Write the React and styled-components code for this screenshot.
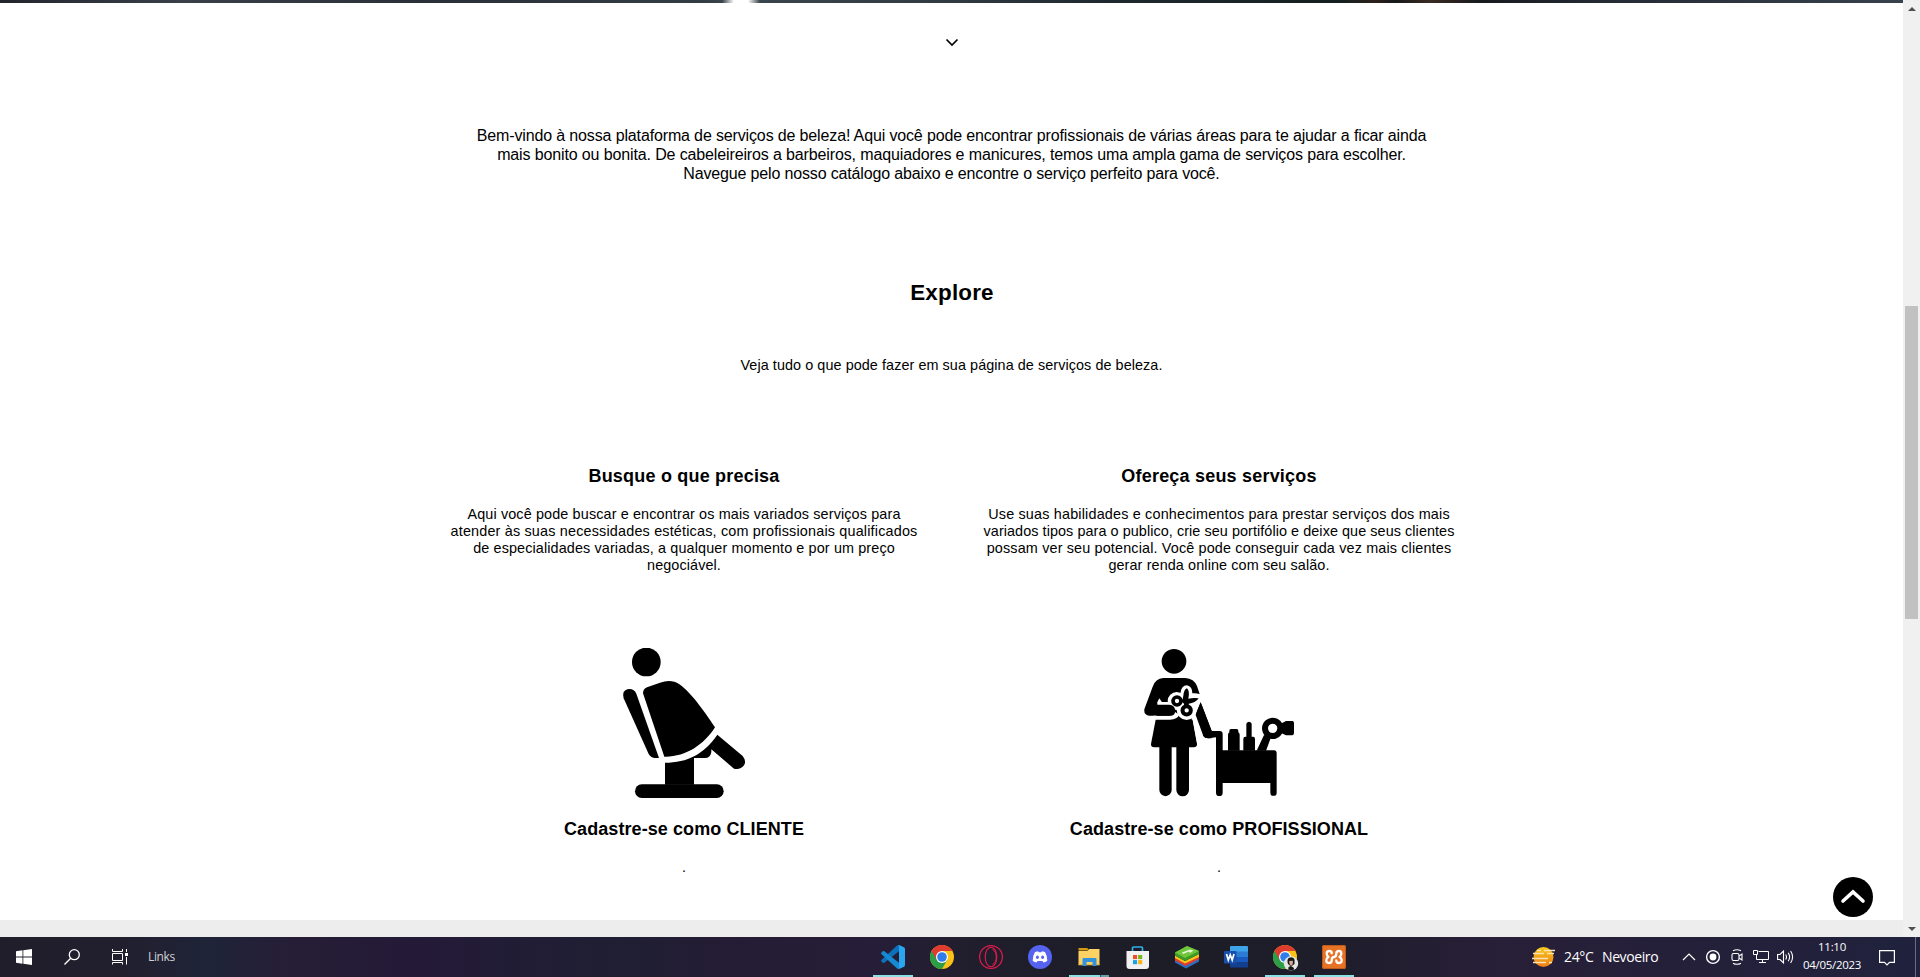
import React from 'react';
import styled, { createGlobalStyle } from 'styled-components';

const Global = createGlobalStyle`
  * { box-sizing: border-box; }
  body { margin: 0; background: #fff; color: #000; overflow: hidden; font-family: "Liberation Sans", Arial, sans-serif; }
  h2, h3, p { margin: 0; }
  svg { display: block; flex: none; }
`;

const Desktop = styled.div`
  width: 1920px;
  height: 977px;
  display: flex;
  flex-direction: column;
`;
const Viewport = styled.div`
  display: flex;
  height: 937px;
`;
const Page = styled.main`
  position: relative;
  width: 1903px;
  display: flex;
  flex-direction: column;
  align-items: center;
`;
const HeroEdge = styled.div`
  width: 100%;
  height: 3px;
  background: linear-gradient(90deg, #22252c 0, #3a3f49 180px, #2a2f38 420px, #333c44 700px, #38424a 722px, #fff 734px, #fff 748px, #39444c 760px, #303a41 950px, #1e2a2f 1100px, #14201f 1340px, #2d211d 1375px, #17191a 1395px, #3a2a23 1430px, #171a1d 1480px, #252a35 1600px, #38424c 1903px);
`;
const ArrowDown = styled.div`
  height: 123px;
  padding-top: 35px;
`;
const Line = styled.span`
  display: block;
  white-space: nowrap;
  letter-spacing: ${(p) => p.$track}px;
`;
const Intro = styled.p`
  font-size: 16px;
  line-height: 19px;
  text-align: center;
`;
const SectionTitle = styled.h2`
  margin-top: 97px;
  padding-left: 1px;
  font-size: 22.4px;
  line-height: 26px;
  letter-spacing: 0.2px;
`;
const Lead = styled.p`
  margin-top: 51px;
  font-size: 14.4px;
  line-height: 17px;
  letter-spacing: 0.07px;
`;
const Columns = styled.section`
  margin-top: 92px;
  display: grid;
  grid-template-columns: 535px 535px;
`;
const Card = styled.article`
  display: flex;
  flex-direction: column;
  align-items: center;
  text-align: center;
`;
const CardTitle = styled.h3`
  font-size: 18px;
  line-height: 21px;
  letter-spacing: ${(p) => p.$track}px;
`;
const CardText = styled.p`
  margin: 19px 0 74px;
  font-size: 14.4px;
  line-height: 17px;
  height: 68px;
`;
const CardAction = styled(CardTitle)`
  margin-top: 21px;
`;
const Dot = styled.p`
  margin-top: 19px;
  font-size: 14.4px;
  line-height: 17px;
`;
const PageFooter = styled.footer`
  width: 100%;
  height: 17px;
  margin-top: auto;
  background: #ededed;
`;
const ToTop = styled.button`
  position: absolute;
  right: 30px;
  bottom: 20px;
  width: 40px;
  height: 40px;
  padding: 0 0 2px;
  border: 0;
  border-radius: 50%;
  background: #000;
  display: flex;
  align-items: center;
  justify-content: center;
`;
const Scrollbar = styled.div`
  width: 17px;
  background: #f0f0f0;
  display: flex;
  flex-direction: column;
  align-items: center;
`;
const ScrollButton = styled.div`
  width: 17px;
  height: 17px;
  display: flex;
  align-items: center;
  justify-content: center;
`;
const Thumb = styled.div`
  width: 13px;
  height: 313px;
  margin: 289px 0 auto;
  background: #c1c1c1;
`;

const Taskbar = styled.nav`
  height: 40px;
  display: flex;
  color: #fff;
  font-family: "Open Sans", sans-serif;
  background: linear-gradient(90deg, #211e2b 0, #211f2e 120px, #1f2438 210px, #261d36 300px, #241a38 420px, #1f1f33 600px, #251c35 760px, #261e38 870px, #201e2c 980px, #1c1d27 1130px, #1e1d2a 1320px, #281f38 1500px, #24203a 1700px, #20223d 1920px);
`;
const StartArea = styled.div`
  width: 869px;
  display: flex;
  align-items: center;
`;
const BarCell = styled.div`
  width: ${(p) => p.$w}px;
  height: 40px;
  display: flex;
  align-items: center;
  justify-content: center;
`;
const LinksLabel = styled.span`
  padding: 0 0 1px 4px;
  font-size: 12px;
  letter-spacing: -0.35px;
  color: #d2d2d6;
`;
const Apps = styled.div`
  display: flex;
  gap: 1px;
`;
const AppSlot = styled.div`
  width: 48px;
  height: 40px;
  display: flex;
  flex-direction: column;
  align-items: center;
  justify-content: space-between;
  padding-top: 8px;
`;
const Underline = styled.div`
  width: 40px;
  height: 2px;
  background: ${(p) =>
    p.$kind === 'open'
      ? '#8be0e4'
      : p.$kind === 'stack'
        ? 'linear-gradient(90deg, #8be0e4 31px, #3c585e 31px, #3c585e 32px, #68a0a5 32px)'
        : 'transparent'};
`;
const Weather = styled.div`
  width: 146px;
  margin-left: auto;
  padding-bottom: 1px;
  display: flex;
  align-items: center;
  font-size: 14px;
  white-space: nowrap;
`;
const Temperature = styled.span`
  margin-left: 8px;
  width: 38px;
  letter-spacing: -0.35px;
`;
const Condition = styled.span`
  letter-spacing: -0.4px;
`;
const Clock = styled.div`
  width: 70px;
  padding-top: 1px;
  text-align: center;
  font-size: 11.5px;
  line-height: 18px;
  letter-spacing: -0.3px;
`;
const ShowDesktop = styled.div`
  width: 5px;
  margin-left: 8px;
  border-left: 1px solid #6c6c80;
`;

const ClientIcon = () => (
  <svg width="150" height="150" viewBox="27 54 450 450">
    <circle cx="139" cy="96" r="43" />
    <path d="M129 190Q129 177 141 172L180 158Q214 146 238 163C277 190 322 258 345 292C312 345 255 382 193 380Z" />
    <path d="M71 205Q65 183 82 178Q101 174 109 191L177 384H163Q152 383 146 372Z" />
    <path d="M352 314L428 378Q440 393 432 406Q420 421 402 416L334 358V366Q331 384 315 384H282V464H195V398C262 398 313 372 352 314Z" />
    <rect x="105" y="463" width="266" height="41" rx="20.5" />
  </svg>
);

const ProfessionalIcon = () => (
  <svg width="150" height="150" viewBox="312 54 450 450">
    <circle cx="402" cy="94" r="37" />
    <path d="M370 144H436Q462 146 471 168L479 192L455 225V270H347L350 257H328Q311 255 313 238L338 170Q346 146 370 144Z" />
    <path d="M347 269H458L471 341Q472 351 461 352H342Q332 351 333 342Z" />
    <path d="M358 345H395V480A18.500 18.500 0 0 1 358 480ZM409 345H447V480A19 19 0 0 1 409 480Z" />
    <path d="M466 255L482 217L515 303H539Q548 303 548 312V361H702Q710 361 710 370V488A9.500 9.500 0 0 1 691 488V459H548V488A10 10 0 0 1 528 488V322L505 325Q494 325 490 318Z" />
    <path d="M564 362V314Q564 309 568 307V302Q568 297 573 297H590Q595 297 595 302V307Q599 309 599 314V362ZM610 362V326Q610 320 616 320H619V281Q620 276 627 275Q634 276 635 281V320H639Q645 320 645 326V362Z" />
    <path d="M650 362L672 315L693 322L678 362ZM722 281L738 273H758Q762 274 762 279V309Q762 315 757 316H738L722 308Z" />
    <circle cx="698" cy="295" r="23" fill="#fff" stroke="#000" strokeWidth="18" />
    <g fill="#fff">
      <path d="M358 205L366 217H352Z" />
      <rect x="352" y="216" width="60" height="9" />
      <path d="M340 257H390Q405 257 405 246L418 254Q412 268 390 269H340Z" />
      <circle cx="410" cy="213" r="27" />
      <circle cx="440" cy="240" r="30" />
      <path d="M421 192Q423 166 441 166Q457 169 457 190Q474 188 485 195Q483 218 461 225L430 228Z" />
      <path d="M456 257L470 252L490 314L472 344L458 269Z" />
    </g>
    <path d="M475 235L482 217L515 303V325H505Q494 325 490 318L467 255Z" />
    <path d="M350 224H388Q405 226 405 240Q404 256 388 257H350Z" />
    <circle cx="411" cy="213" r="12" fill="none" stroke="#000" strokeWidth="11" />
    <circle cx="440" cy="241" r="12.500" fill="none" stroke="#000" strokeWidth="12" />
    <path d="M423 214Q430 207 430 197Q432 178 441 175Q450 183 445 206Q461 202 476 205Q466 220 446 221L447 230H434L431 220Z" />
  </svg>
);

const CodeIcon = () => (
  <svg width="24" height="24" viewBox="63 45 72 72">
    <path fill="#0d70b8" d="M118 63L72 99Q70 100 68 98L64 94Q62 92 64 90L112 46L118 47Z" />
    <path fill="#1789d2" d="M118 99L72 63Q70 62 68 64L64 68Q62 70 64 72L112 116L118 115Z" />
    <path fill="#2aa6f0" d="M112 46Q115 44 119 46L132 52Q135 54 135 57V105Q135 108 132 110L119 116Q115 118 112 116Q117 118 117 112V50Q117 44 112 46Z" />
  </svg>
);
const ChromeMark = () => (
  <>
    <circle cx="12" cy="12" r="12" fill="#fbc116" />
    <path fill="#2b9e47" d="M1.600 6A12 12 0 0 0 12 24L17.200 15L12 12Z" />
    <path fill="#df3b2f" d="M1.600 6A12 12 0 0 1 22.400 6H12V12L6.800 15Z" />
    <circle cx="12" cy="12" r="6" fill="#fff" />
    <circle cx="12" cy="12" r="4.800" fill="#2f7de9" />
  </>
);
const ChromeIcon = () => (
  <svg width="24" height="24" viewBox="0 0 24 24"><ChromeMark /></svg>
);
const ChromeProfileIcon = () => (
  <svg width="24" height="24" viewBox="0 0 24 24" overflow="visible">
    <ChromeMark />
    <circle cx="18" cy="18.500" r="7.200" fill="#e5e5e3" />
    <path fill="#17171a" d="M14.500 17Q14 12.500 18 12.200Q22.300 12.500 21.500 17L21.500 19L18 21.500L15 19ZM15.500 22L18 21L21 23L20.500 25.300Q18 26 15.300 25Z" />
    <path fill="#d8ab98" d="M16.200 16L19.800 15.700Q20.300 19.500 18.300 20.700Q16.200 20 16.200 16Z" />
  </svg>
);
const OperaIcon = () => (
  <svg width="24" height="24" viewBox="0 0 24 24" fill="none" stroke="#e31b4c">
    <circle cx="12" cy="12" r="11.400" strokeWidth="1.200" />
    <ellipse cx="12" cy="12" rx="5.800" ry="9.800" strokeWidth="1.100" />
    <path d="M13.500 4.500C18.500 6 18.500 18 13.500 19.500" strokeWidth="1" />
  </svg>
);
const DiscordIcon = () => (
  <svg width="24" height="24" viewBox="0 0 24 24">
    <circle cx="12" cy="12" r="12" fill="#5663f0" />
    <path fill="#fff" d="M7 7L10 6.200L10.600 7.200H13.400L14 6.200L17 7Q19.500 11 19.300 15.700Q17.500 17.200 15.400 17.500L14.500 16H9.500L8.600 17.500Q6.500 17.200 4.700 15.700Q4.500 11 7 7Z" />
    <ellipse cx="9.400" cy="12.300" rx="1.500" ry="1.700" fill="#5663f0" />
    <ellipse cx="14.600" cy="12.300" rx="1.500" ry="1.700" fill="#5663f0" />
  </svg>
);
const FolderIcon = () => (
  <svg width="24" height="24" viewBox="0.500 0 24 24">
    <path fill="#d39a12" d="M2 3H11L12 5.500H2Z" />
    <path fill="#fbd263" d="M2 6H11L12.500 4H23V20H2Z" />
    <path fill="#e9b83c" d="M2 19H23V20.300H2Z" />
    <path fill="#3492dd" d="M6 21V14Q6 13 7 13H19Q20 13 20 14V21H16V17H10V21Z" />
  </svg>
);
const StoreIcon = () => (
  <svg width="24" height="24" viewBox="0.500 0 24 24">
    <path d="M7 7V3Q7 2 8 2H16Q17 2 17 3V7" fill="none" stroke="#31aee8" strokeWidth="1.700" />
    <path fill="#f1f1f1" d="M1 6H23.500V21Q23.500 24 20.500 24H4Q1 24 1 21Z" />
    <path fill="#ef5022" d="M7.500 10H11.600V14.100H7.500Z" />
    <path fill="#79b51c" d="M12.600 10H16.700V14.100H12.600Z" />
    <path fill="#18a1e5" d="M7.500 15.100H11.600V19.200H7.500Z" />
    <path fill="#f8b312" d="M12.600 15.100H16.700V19.200H12.600Z" />
  </svg>
);
const StackIcon = () => (
  <svg width="24" height="24" viewBox="0 0 24 24">
    <path fill="#2b6fc0" d="M0 14.500L10 20L24 13V16.500L11 23.500L0 17.500Z" />
    <path fill="#e23a2c" d="M0 12.500L10 18L24 11V14L10.500 21L0 15.500Z" />
    <path fill="#f7c51e" d="M0 10.500L10 16L24 9V12L10 18.500L0 13Z" />
    <path fill="#3c9c25" d="M0 7.500L12 1L24 6V9L10 16L0 10.500Z" />
    <path fill="#70c53a" d="M0 7.500L12 1L24 6L10 13Z" />
    <path fill="#e9f6dc" d="M7 7.500L15 4.500L18.500 5.500L15 8L14 6.500L8 9Z" />
  </svg>
);
const WordIcon = () => (
  <svg width="24" height="24" viewBox="0 0 24 24">
    <path fill="#3fa3ea" d="M6 2Q6 1 7 1H23Q24 1 24 2V7H6Z" />
    <path fill="#2b7cd3" d="M6 6.500H24V12H6Z" />
    <path fill="#185abd" d="M6 12H24V17.500H6Z" />
    <path fill="#133f91" d="M6 17.500H24V21.500Q24 22.500 23 22.500H7Q6 22.500 6 21.500Z" />
    <rect y="6" width="12.500" height="12.500" rx="1" fill="#174fae" />
    <path d="M2.500 9L4.300 15L6.250 9.800L8.200 15L10 9" fill="none" stroke="#fff" strokeWidth="1.700" />
  </svg>
);
const XamppIcon = () => (
  <svg width="24" height="24" viewBox="0 0 24 24">
    <rect width="24" height="24" rx="2" fill="#e67226" />
    <rect x=".5" y=".5" width="23" height="23" rx="2" fill="none" stroke="#bd5a19" />
    <path d="M9.700 9.300V7.500Q9.500 6 7.500 6Q4.700 6 4.700 8.500Q4.700 11 6.500 12Q4.300 13 4.300 15.300Q4.300 18 7 18Q9.700 18 9.700 15.500Q9.700 12 12 12Q14.300 12 14.300 8.500Q14.300 6 17 6Q19.300 6 19.300 8.500Q19.300 11 17.500 12Q19.700 13 19.700 15.300Q19.700 18 17 18Q14.300 18 14.300 15.500V14.500" fill="none" stroke="#fff" strokeWidth="2.300" strokeLinejoin="round" />
  </svg>
);

const APPS = [
  [CodeIcon, 'open'],
  [ChromeIcon, 'none'],
  [OperaIcon, 'none'],
  [DiscordIcon, 'none'],
  [FolderIcon, 'stack'],
  [StoreIcon, 'none'],
  [StackIcon, 'none'],
  [WordIcon, 'none'],
  [ChromeProfileIcon, 'open'],
  [XamppIcon, 'open'],
];

const WindowsIcon = () => (
  <svg width="16" height="16" viewBox="0 0 16 16" fill="#fff">
    <path d="M0 2.200L6.500 1.300V7.500H0ZM7.300 1.200L16 0V7.500H7.300ZM0 8.400H6.500V14.700L0 13.800ZM7.300 8.400H16V16L7.300 14.800Z" />
  </svg>
);
const SearchIcon = () => (
  <svg width="16" height="16" viewBox="0 0 16 16" fill="none" stroke="#fff" strokeWidth="1.300">
    <circle cx="10.300" cy="5.700" r="5" />
    <path d="M6.700 9.300L.5 15.500" />
  </svg>
);
const TaskViewIcon = () => (
  <svg width="16" height="16" viewBox="0 0 16 16" fill="none" stroke="#fff">
    <path d="M.5 0V2.500H10.500V0M.5 4.500H10.500V11.500H.5ZM.5 15.500V13.500H10.500V15.500M14.500 0V3M14.500 8V15.500" />
    <path d="M13 4H16V7H13Z" fill="#fff" stroke="none" />
  </svg>
);
const FogIcon = () => (
  <svg width="25" height="22" viewBox="0 0 25 22">
    <defs>
      <linearGradient id="sun" x1="0" y1="0" x2="0" y2="1">
        <stop stopColor="#f9c918" />
        <stop offset="1" stopColor="#ee7b19" />
      </linearGradient>
    </defs>
    <circle cx="12.500" cy="11" r="10" fill="url(#sun)" />
    <path d="M6 4.500H10M13 4.500H24M2 7.500H13M16 7.500H23M1 12.500H17M2 16.500H15M18 16.500H21" stroke="#f6e3b4" strokeWidth="1.600" fill="none" />
  </svg>
);
const TrayChevron = () => (
  <svg width="14" height="8" viewBox="0 0 14 8" fill="none" stroke="#fff" strokeWidth="1.200">
    <path d="M1 7L7 1L13 7" />
  </svg>
);
const RecordIcon = () => (
  <svg width="16" height="16" viewBox="0 0 16 16">
    <circle cx="8" cy="8" r="6.400" fill="none" stroke="#fff" strokeWidth="1.400" />
    <circle cx="8" cy="8" r="3.400" fill="#fff" />
  </svg>
);
const MeetIcon = () => (
  <svg width="16" height="16" viewBox="0 0 16 16" fill="none" stroke="#fff" strokeWidth="1.100">
    <rect x="3" y="4.500" width="7" height="7" rx="1.500" />
    <path d="M10 7L13 5V11L10 9M4 1.800Q8 -.4 12 1.800M4 14.200Q8 16.400 12 14.200" />
  </svg>
);
const NetworkIcon = () => (
  <svg width="16" height="16" viewBox="0 0 16 16" fill="none" stroke="#fff">
    <path d="M5.500 2.500H15.500V10.500H3.500V6M.5 1.500H4.500V5.500H.5ZM9.500 10.500V13.500M6 13.500H13" />
  </svg>
);
const SpeakerIcon = () => (
  <svg width="17" height="16" viewBox="0 0 17 16" fill="none" stroke="#fff" strokeWidth="1.100">
    <path d="M.6 5.500H3L6.500 2V14L3 10.500H.6ZM8.700 5.500Q10.300 8 8.700 10.500M11.200 3.800Q14 8 11.200 12.200M13.600 2Q17.600 8 13.600 14" />
  </svg>
);
const NoticeIcon = () => (
  <svg width="16" height="17" viewBox="0 0 16 17" fill="none" stroke="#fff" strokeWidth="1.200">
    <path d="M.6 1.600H15.400V13.400H10.500L8 15.900L5.500 13.400H.6Z" />
  </svg>
);

const INTRO = [
  ['Bem-vindo à nossa plataforma de serviços de beleza! Aqui você pode encontrar profissionais de várias áreas para te ajudar a ficar ainda', -0.142],
  ['mais bonito ou bonita. De cabeleireiros a barbeiros, maquiadores e manicures, temos uma ampla gama de serviços para escolher.', -0.13],
  ['Navegue pelo nosso catálogo abaixo e encontre o serviço perfeito para você.', -0.155],
];
const CARDS = [
  {
    title: 'Busque o que precisa',
    lines: [
      ['Aqui você pode buscar e encontrar os mais variados serviços para', 0.13],
      ['atender às suas necessidades estéticas, com profissionais qualificados', 0.18],
      ['de especialidades variadas, a qualquer momento e por um preço', 0.12],
      ['negociável.', 0.1],
    ],
    Icon: ClientIcon,
    action: 'Cadastre-se como CLIENTE',
  },
  {
    title: 'Ofereça seus serviços',
    lines: [
      ['Use suas habilidades e conhecimentos para prestar serviços dos mais', 0.18],
      ['variados tipos para o publico, crie seu portifólio e deixe que seus clientes', 0.07],
      ['possam ver seu potencial. Você pode conseguir cada vez mais clientes', 0.15],
      ['gerar renda online com seu salão.', 0.11],
    ],
    Icon: ProfessionalIcon,
    action: 'Cadastre-se como PROFISSIONAL',
  },
];

export default function App() {
  return (
    <Desktop>
      <Global />
      <Viewport>
        <Page>
          <HeroEdge />
          <ArrowDown>
            <svg width="14" height="9" viewBox="0 0 14 9" fill="none" stroke="#000" strokeWidth="1.700">
              <path d="M1.500 1.500L7 7L12.500 1.500" />
            </svg>
          </ArrowDown>
          <Intro>
            {INTRO.map(([text, track]) => (
              <Line key={text} $track={track}>{text}</Line>
            ))}
          </Intro>
          <SectionTitle>Explore</SectionTitle>
          <Lead>Veja tudo o que pode fazer em sua página de serviços de beleza.</Lead>
          <Columns>
            {CARDS.map(({ title, lines, Icon, action }) => (
              <Card key={title}>
                <CardTitle $track={0.2}>{title}</CardTitle>
                <CardText>
                  {lines.map(([text, track]) => (
                    <Line key={text} $track={track}>{text}</Line>
                  ))}
                </CardText>
                <Icon />
                <CardAction $track={0.08}>{action}</CardAction>
                <Dot>.</Dot>
              </Card>
            ))}
          </Columns>
          <PageFooter />
          <ToTop aria-label="Voltar ao topo">
            <svg width="26" height="16" viewBox="0 0 26 16" fill="none" stroke="#fff" strokeWidth="3.600" strokeLinecap="round">
              <path d="M3 13L13 4L23 13" />
            </svg>
          </ToTop>
        </Page>
        <Scrollbar>
          <ScrollButton>
            <svg width="8" height="4" viewBox="0 0 8 4"><path d="M0 4L4 0L8 4Z" fill="#505050" /></svg>
          </ScrollButton>
          <Thumb />
          <ScrollButton>
            <svg width="8" height="4" viewBox="0 0 8 4"><path d="M0 0L4 4L8 0Z" fill="#505050" /></svg>
          </ScrollButton>
        </Scrollbar>
      </Viewport>
      <Taskbar>
        <StartArea>
          <BarCell $w={48}><WindowsIcon /></BarCell>
          <BarCell $w={48}><SearchIcon /></BarCell>
          <BarCell $w={48}><TaskViewIcon /></BarCell>
          <LinksLabel>Links</LinksLabel>
        </StartArea>
        <Apps>
          {APPS.map(([Icon, kind], i) => (
            <AppSlot key={i}>
              <Icon />
              <Underline $kind={kind} />
            </AppSlot>
          ))}
        </Apps>
        <Weather>
          <FogIcon />
          <Temperature>24°C</Temperature>
          <Condition>Nevoeiro</Condition>
        </Weather>
        <BarCell $w={24}><TrayChevron /></BarCell>
        <BarCell $w={24}><RecordIcon /></BarCell>
        <BarCell $w={24}><MeetIcon /></BarCell>
        <BarCell $w={24}><NetworkIcon /></BarCell>
        <BarCell $w={24}><SpeakerIcon /></BarCell>
        <Clock>
          <div>11:10</div>
          <div>04/05/2023</div>
        </Clock>
        <BarCell $w={40}><NoticeIcon /></BarCell>
        <ShowDesktop />
      </Taskbar>
    </Desktop>
  );
}
